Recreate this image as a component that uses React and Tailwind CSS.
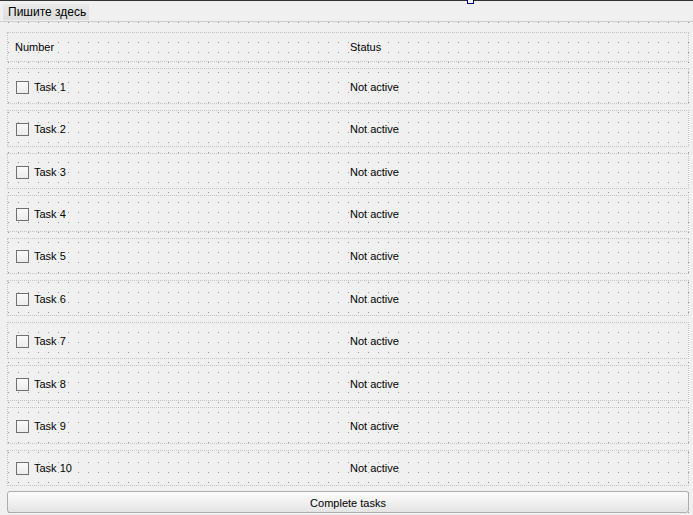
import React from 'react';

const tasks = Array.from({ length: 10 }, (_, i) => ({ name: `Task ${i + 1}`, status: 'Not active' }));

function TaskRow({ task }) {
  return (
    <div className="flex-1 grid grid-cols-[335px_1fr] items-center border border-dotted border-[#c4c4c4] pl-[7px] pt-[2px]">
      <div className="flex items-center gap-[5px]">
        <span className="ml-px w-[13px] h-[13px] border border-[#707070] bg-gradient-to-b from-[#fafafa] to-[#ececec]" />
        <span>{task.name}</span>
      </div>
      <div>{task.status}</div>
    </div>
  );
}

export default function App() {
  return (
    <div className="relative w-[693px] h-[515px] overflow-hidden bg-[#f0f0f0] text-black text-[11px] leading-none font-['Liberation_Sans',Arial,sans-serif] flex flex-col">
      {/* designer selection handle */}
      <span className="absolute left-[467px] top-[-2px] w-[7px] h-[6px] border border-[#000080] bg-[#f4f4ff] z-10" />

      <div className="h-px bg-[#333333]" />

      {/* menu bar */}
      <div className="h-[20px] flex items-start">
        <div className="mt-[3px] ml-[3px] h-[16px] pl-[5px] pr-[3px] flex items-center text-[12px] bg-gradient-to-b from-[#e9e9e9] to-[#dedede]">
          Пишите здесь
        </div>
      </div>

      <div className="h-px bg-[#cdcdcd]" />

      {/* form area with designer grid */}
      <div className="flex-1 flex flex-col pt-[10px] pb-[2px] pl-[7px] pr-[4px] bg-[radial-gradient(circle_at_0.5px_0.5px,#959595_0.6px,transparent_0.7px)] bg-size-[10px_10px] bg-position-[8px_0px]">
        <div className="h-[30px] grid grid-cols-[335px_1fr] items-center border border-dotted border-[#c4c4c4] pl-[7px]">
          <div>Number</div>
          <div>Status</div>
        </div>

        <div className="mt-[6px] h-[418px] flex flex-col gap-[6px]">
          {tasks.map((t) => (
            <TaskRow key={t.name} task={t} />
          ))}
        </div>

        <button
          type="button"
          className="mt-[5px] h-[22px] pt-[2px] rounded-[3px] border border-[#adadad] bg-gradient-to-b from-[#fdfdfd] to-[#e4e4e4] text-[11px] text-black"
        >
          Complete tasks
        </button>
      </div>
    </div>
  );
}
